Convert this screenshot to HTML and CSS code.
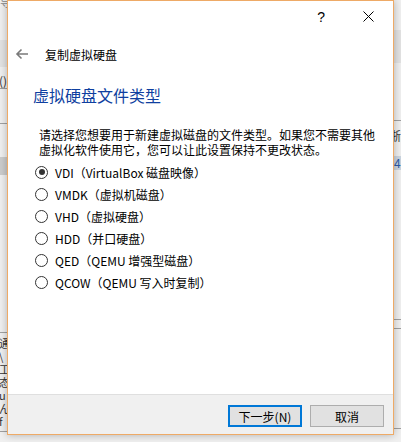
FILE: index.html
```html
<!DOCTYPE html>
<html lang="zh-CN">
<head>
  <meta charset="UTF-8" />
  <title>复制虚拟硬盘</title>
  <link rel="stylesheet" href="styles.css">
</head>
<body>
  <div class="desk">
    <div class="side left">
      <div class="frag top">导</div>
      <div class="band"></div>
      <div class="frag paren">()</div>
      <div class="rule r1"></div>
      <div class="rule r2"></div>
      <div class="sel"></div>
      <div class="rule r3"></div>
      <div class="lines">
        <div class="frag">通</div>
        <div class="frag">\</div>
        <div class="frag">工</div>
        <div class="frag">态</div>
        <div class="frag">u</div>
        <div class="frag">ん</div>
        <div class="frag">f</div>
      </div>
      <div class="rule r4"></div>
    </div>

    <div class="dialog">
      <div class="titlebar">
        <span class="help">?</span>
        <span class="close">
          <svg width="11" height="11" viewBox="0 0 11 11"><path d="M0.5 0.5 L10.5 10.5 M10.5 0.5 L0.5 10.5" stroke="#000" stroke-width="1" fill="none"/></svg>
        </span>
      </div>

      <div class="nav">
        <svg class="back" width="14" height="12" viewBox="0 0 14 12"><path d="M13 6 H2 M6.5 1.5 L2 6 L6.5 10.5" stroke="#7a7a7a" stroke-width="1.6" fill="none"/></svg>
        <span class="navtitle">复制虚拟硬盘</span>
      </div>

      <div class="content">
        <h1>虚拟硬盘文件类型</h1>
        <p class="intro">请选择您想要用于新建虚拟磁盘的文件类型。如果您不需要其他虚拟化软件使用它，您可以让此设置保持不更改状态。</p>
        <ul class="options">
          <li><span class="radio checked"></span>VDI（VirtualBox 磁盘映像）</li>
          <li><span class="radio"></span>VMDK（虚拟机磁盘）</li>
          <li><span class="radio"></span>VHD（虚拟硬盘）</li>
          <li><span class="radio"></span>HDD（并口硬盘）</li>
          <li><span class="radio"></span>QED（QEMU 增强型磁盘）</li>
          <li><span class="radio"></span>QCOW（QEMU 写入时复制）</li>
        </ul>
      </div>

      <div class="footer">
        <button class="btn primary">下一步(N)</button>
        <button class="btn">取消</button>
      </div>
    </div>

    <div class="side right">
      <div class="band"></div>
      <div class="rule r1"></div>
      <div class="frag mark">浙</div>
      <div class="sel blue">4</div>
      <div class="rule r2"></div>
      <div class="rule r3"></div>
      <div class="rule r4"></div>
    </div>
  </div>
</body>
</html>
```

FILE: styles.css
```css
body {
  margin: 0;
  background: #f0f0f0;
  font-family: "Noto Sans CJK SC", "Noto Sans", sans-serif;
  font-size: 12px;
  color: #000;
}
.desk {
  display: flex;
  height: 442px;
  overflow: hidden;
}

/* parent window peeking out on both sides */
.side {
  width: 7px;
  flex: none;
  overflow: hidden;
  background: #f0f0f0;
  color: #333;
  font-size: 12px;
  line-height: 12px;
}
.side.right {
  width: 8px;
}
.frag {
  white-space: nowrap;
}
.left .top {
  color: #888;
  height: 8px;
  overflow: hidden;
  line-height: 4px;
}
.left .band {
  height: 27px;
  margin-top: 32px;
  background: #e3e3e3;
}
.left .paren {
  margin-top: 8px;
  margin-left: -1px;
}
.rule {
  height: 1px;
  background: #a0a0a0;
}
.left .r1 { margin-top: 1px; }
.left .r2 { margin-top: 34px; }
.left .sel {
  height: 18px;
  margin-top: 33px;
  background: #cccccc;
}
.left .r3 { margin-top: 157px; }
.left .lines {
  margin-top: 4px;
  margin-left: -1px;
}
.left .lines .frag {
  height: 13px;
  line-height: 13px;
  font-size: 11px;
  overflow: hidden;
}
.left .r4 { margin-top: 3px; }

.right .band {
  height: 33px;
  margin-top: 30px;
  background: #e3e3e3;
}
.right .r1 { margin-top: 57px; }
.right .mark {
  margin-top: 9px;
  margin-left: -5px;
}
.right .sel {
  height: 14px;
  margin-top: 14px;
  background: #cbd5e0;
  color: #2a5aa8;
  line-height: 14px;
}
.right .r2 { margin-top: 149px; }
.right .r3 { margin-top: 8px; }
.right .r4 { margin-top: 99px; }

/* the wizard window */
.dialog {
  width: 385px;
  height: 433px;
  flex: none;
  display: flex;
  flex-direction: column;
  background: #fff;
  border: 1px solid #eeaa66;
  box-shadow: 0 0 8px rgba(0,0,0,0.28);
  position: relative;
  z-index: 1;
}
.titlebar {
  height: 29px;
  display: flex;
  align-items: center;
  justify-content: flex-end;
}
.help {
  font-family: "Liberation Sans", sans-serif;
  font-size: 14px;
  margin-right: 38px;
  margin-top: 2px;
}
.close {
  display: flex;
  margin-right: 19px;
  margin-top: 1px;
}
.nav {
  height: 24px;
  margin-top: 12px;
  display: flex;
  align-items: center;
  padding-left: 7px;
}
.back {
  margin-right: 16px;
}
.navtitle {
  font-size: 12px;
}
.content {
  flex: 1;
}
h1 {
  margin: 19px 0 0 25px;
  font-size: 16px;
  line-height: 20px;
  font-weight: normal;
  color: #0f3fa0;
}
.intro {
  margin: 22px 0 0 31px;
  width: 338px;
  line-height: 15px;
}
.options {
  list-style: none;
  margin: 4px 0 0 27px;
  padding: 0;
}
.options li {
  height: 22px;
  display: flex;
  align-items: center;
}
.radio {
  width: 11px;
  height: 11px;
  border: 1px solid #333;
  border-radius: 50%;
  margin-right: 7px;
  display: flex;
  align-items: center;
  justify-content: center;
  box-sizing: content-box;
}
.radio.checked::after {
  content: "";
  width: 6px;
  height: 6px;
  border-radius: 50%;
  background: #333;
}
.footer {
  height: 40px;
  border-top: 1px solid #dfdfdf;
  background: #f0f0f0;
  display: flex;
  justify-content: flex-end;
  align-items: flex-start;
  gap: 8px;
  padding: 10px 9px 0 0;
  box-sizing: border-box;
}
.btn {
  width: 74px;
  height: 22px;
  padding: 0;
  background: #e1e1e1;
  border: 1px solid #adadad;
  font-family: "Noto Sans CJK SC", sans-serif;
  font-size: 12px;
  color: #000;
}
.btn.primary {
  border: 2px solid #0078d7;
}
```
